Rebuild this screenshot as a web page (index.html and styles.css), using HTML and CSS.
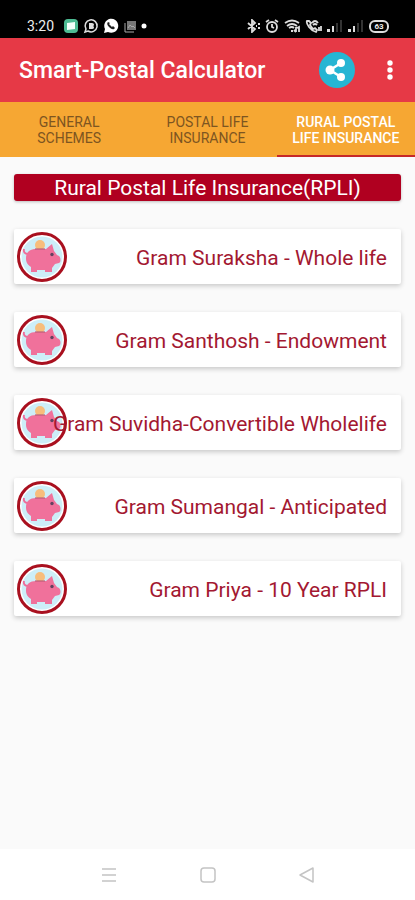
FILE: index.html
```html
<!DOCTYPE html>
<html lang="en">
<head>
<meta charset="utf-8">
<meta name="viewport" content="width=device-width, initial-scale=1">
<title>Smart-Postal Calculator</title>
<link rel="stylesheet" href="styles.css">
</head>
<body>
<svg class="defs" aria-hidden="true">
  <symbol id="piggy" viewBox="0 0 50 50">
    <circle cx="25" cy="25" r="23.5" fill="#fff"/>
    <circle cx="25" cy="25" r="20.5" fill="#cdeef8"/>
    <circle cx="23" cy="13" r="5" fill="#f7bd7c"/>
    <path d="M7 17c-1 3 1 5 4 5" fill="none" stroke="#ee6c9a" stroke-width="2"/>
    <path d="M9 26c0-6 4-9 10-9h10l6-5 2 7 3 4 2 1c2 2 2 6 0 7l-4 1-3 4v4h-7v-2H20v2h-6v-5c-4-3-5-5-5-9z" fill="#f0719b"/>
    <path d="M18 17h10" stroke="#b95f78" stroke-width="1.200"/>
    <circle cx="35" cy="22.500" r="1.700" fill="#624260"/>
    <circle cx="25" cy="25" r="23.500" fill="none" stroke="#a9101f" stroke-width="3"/>
  </symbol>
</svg>
<div class="screen">
  <div class="status">
    <div class="status-group">
      <span class="clock">3:20</span>
      <svg width="16" height="16" viewBox="0 0 16 16"><rect x="1" y="1" width="14" height="14" rx="4" fill="#4dbb93"/><path d="M4 5l8-1v7l-8 1z" fill="#f3fffa"/></svg>
      <svg width="16" height="16" viewBox="0 0 16 16"><path d="M2 14l1-3a6 6 0 1 1 2 2z" fill="none" stroke="#ddd" stroke-width="1.500"/><path d="M6 5h3q2 0 2 1.500T10 8q1 0 1 1.500T9 11H6z" fill="#ddd"/></svg>
      <svg width="16" height="16" viewBox="0 0 16 16"><path d="M1 15l1-4a7 7 0 1 1 3 3z" fill="#fff"/><path d="M5 4q-2 2 1 5t5 2l1-1-2-2-1 1-3-3 1-1z" fill="#222"/></svg>
      <svg width="14" height="16" viewBox="0 0 14 16"><path d="M4 3h9v9H4z" fill="#777"/><path d="M2 5v9h9M5 10l2-3 2 2 1-1 2 2" fill="none" stroke="#aaa"/></svg>
      <svg width="6" height="16" viewBox="0 0 6 16"><circle cx="3" cy="8" r="2.500" fill="#fff"/></svg>
    </div>
    <div class="status-group status-right">
      <svg width="14" height="14" viewBox="0 0 14 14" fill="none" stroke="#ddd" stroke-width="1.800"><path d="M2 4l7 6-3 3V1l3 3-7 6M10 7h1M12 5h2M12 9h2"/></svg>
      <svg width="14" height="14" viewBox="0 0 14 14" fill="none" stroke="#ddd" stroke-width="1.800"><circle cx="7" cy="8" r="5"/><path d="M1 3l3-2M13 3l-3-2M7 5v3l2 1"/></svg>
      <svg width="16" height="14" viewBox="0 0 16 14" fill="none" stroke="#ddd" stroke-width="1.800"><path d="M1 4q7-5 14 0M3 7q5-4 10 0M5 9q3-2 5 0M7 12h2M12 8v5M10 11l2 2M15 13V8l-2 1"/></svg>
      <svg width="17" height="14" viewBox="0 0 17 14" fill="none" stroke="#ddd" stroke-width="1.800"><path d="M2 2q-1 2 2 6t7 5l1-2-2-2-2 1-3-4 1-2-2-2zM7 4q3-4 6 0M8 6q2-2 4 0M14 12V8M16 12V7"/></svg>
      <svg width="16" height="14" viewBox="0 0 16 14"><path d="M0 10h3v3H0zM5 7h2v6H5z" fill="#ddd"/><path d="M9 4h2v9H9zM13 1h2v12h-2z" fill="#333"/></svg>
      <svg width="16" height="14" viewBox="0 0 16 14"><path d="M0 10h3v3H0zM5 7h2v6H5z" fill="#ddd"/><path d="M9 4h2v9H9zM13 1h2v12h-2z" fill="#333"/></svg>
      <span class="battery">63</span>
    </div>
  </div>
  <header class="appbar">
    <h1>Smart-Postal Calculator</h1>
    <button class="share" aria-label="Share">
      <svg width="36" height="36" viewBox="0 0 36 36"><path d="M22 11L11 18l11 7" fill="none" stroke="#fff" stroke-width="2.500"/><g fill="#fff"><circle cx="22" cy="11" r="4"/><circle cx="11" cy="18" r="4.500"/><circle cx="22" cy="25" r="4"/></g></svg>
    </button>
    <button class="more" aria-label="More options">
      <svg width="8" height="20" viewBox="0 0 8 20" fill="#fff"><circle cx="4" cy="3" r="2.700"/><circle cx="4" cy="10" r="2.700"/><circle cx="4" cy="17" r="2.700"/></svg>
    </button>
  </header>
  <nav class="tabs">
    <button class="tab">GENERAL<br>SCHEMES</button>
    <button class="tab">POSTAL LIFE<br>INSURANCE</button>
    <button class="tab active">RURAL POSTAL<br>LIFE INSURANCE</button>
  </nav>
  <main>
    <h2>Rural Postal Life Insurance(RPLI)</h2>
    <button class="card"><svg class="pig"><use href="#piggy"/></svg><span>Gram Suraksha - Whole life</span></button>
    <button class="card"><svg class="pig"><use href="#piggy"/></svg><span>Gram Santhosh - Endowment</span></button>
    <button class="card"><svg class="pig"><use href="#piggy"/></svg><span>Gram Suvidha-Convertible Wholelife</span></button>
    <button class="card"><svg class="pig"><use href="#piggy"/></svg><span>Gram Sumangal - Anticipated</span></button>
    <button class="card"><svg class="pig"><use href="#piggy"/></svg><span>Gram Priya - 10 Year RPLI</span></button>
  </main>
  <footer class="navbar">
    <button aria-label="Recent apps"><svg width="16" height="16" viewBox="0 0 16 16"><path d="M1 2h14M1 8h14M1 14h14"/></svg></button>
    <button aria-label="Home"><svg width="16" height="16" viewBox="0 0 16 16"><rect x="1" y="1" width="14" height="14" rx="3"/></svg></button>
    <button aria-label="Back"><svg width="16" height="16" viewBox="0 0 16 16"><path d="M14 1v14L1 8z" stroke-linejoin="round"/></svg></button>
  </footer>
</div>
</body>
</html>
```
FILE: styles.css
```css
* { box-sizing: border-box; }
body { margin: 0; font-family: Roboto, sans-serif; }
button { border: 0; padding: 0; background: none; font: inherit; }
svg { display: block; flex: none; }
.defs { position: absolute; width: 0; height: 0; }
.screen { display: flex; flex-direction: column; min-height: 100vh; background: #fafafa; }
.status {
  display: flex; justify-content: space-between; align-items: center;
  padding: 16px 26px 2px 27px; height: 38px; background: #000; color: #eee;
}
.status-group { display: flex; align-items: center; gap: 4px; }
.status-right { gap: 5px; }
.clock { margin-right: 5px; font-size: 14px; line-height: 18px; }
.battery {
  width: 20px; border: 2px solid #ddd; border-radius: 6px;
  font-size: 8px; line-height: 9px; font-weight: 700; text-align: center;
}
.appbar { display: flex; align-items: center; height: 64px; padding: 0 21px 0 19px; background: #e63946; color: #fff; }
h1 { flex: 1; margin: 0; padding-top: 2px; font-size: 23px; line-height: 28px; font-weight: 500; white-space: nowrap; }
.share { border-radius: 50%; background: #26b5d3; }
.more { margin-left: 31px; }
.tabs { display: grid; grid-template-columns: repeat(3, 1fr); height: 55px; background: #f6a733; }
.tab {
  padding-top: 2px; border-bottom: 2px solid transparent;
  color: #7d5521; font-size: 14px; line-height: 16px; white-space: nowrap;
}
.tab.active { border-color: #c62828; color: #fff; font-weight: 500; }
main { flex: 1; display: flex; flex-direction: column; gap: 28px; padding: 17px 14px; }
h2 {
  margin: 0; padding-top: 2px; border-radius: 3px; background: #b00020; color: #fff;
  font-size: 21px; line-height: 25px; font-weight: 400; text-align: center;
  box-shadow: 0 1px 3px rgba(0, 0, 0, .25);
}
.card {
  display: grid; align-items: center; height: 55px; padding: 0 14px 0 3px;
  border-radius: 2px; background: #fff; color: #a31831;
  font-size: 21px; line-height: 24px; box-shadow: 0 2px 5px rgba(0, 0, 0, .2);
}
.card > * { grid-area: 1 / 1; }
.card span { justify-self: end; padding-top: 2px; white-space: nowrap; }
.pig { width: 50px; height: 50px; }
.navbar { display: flex; justify-content: center; gap: 83px; height: 51px; background: #fff; }
.navbar svg { fill: none; stroke: #c4c4c4; stroke-width: 1.5px; }
```
